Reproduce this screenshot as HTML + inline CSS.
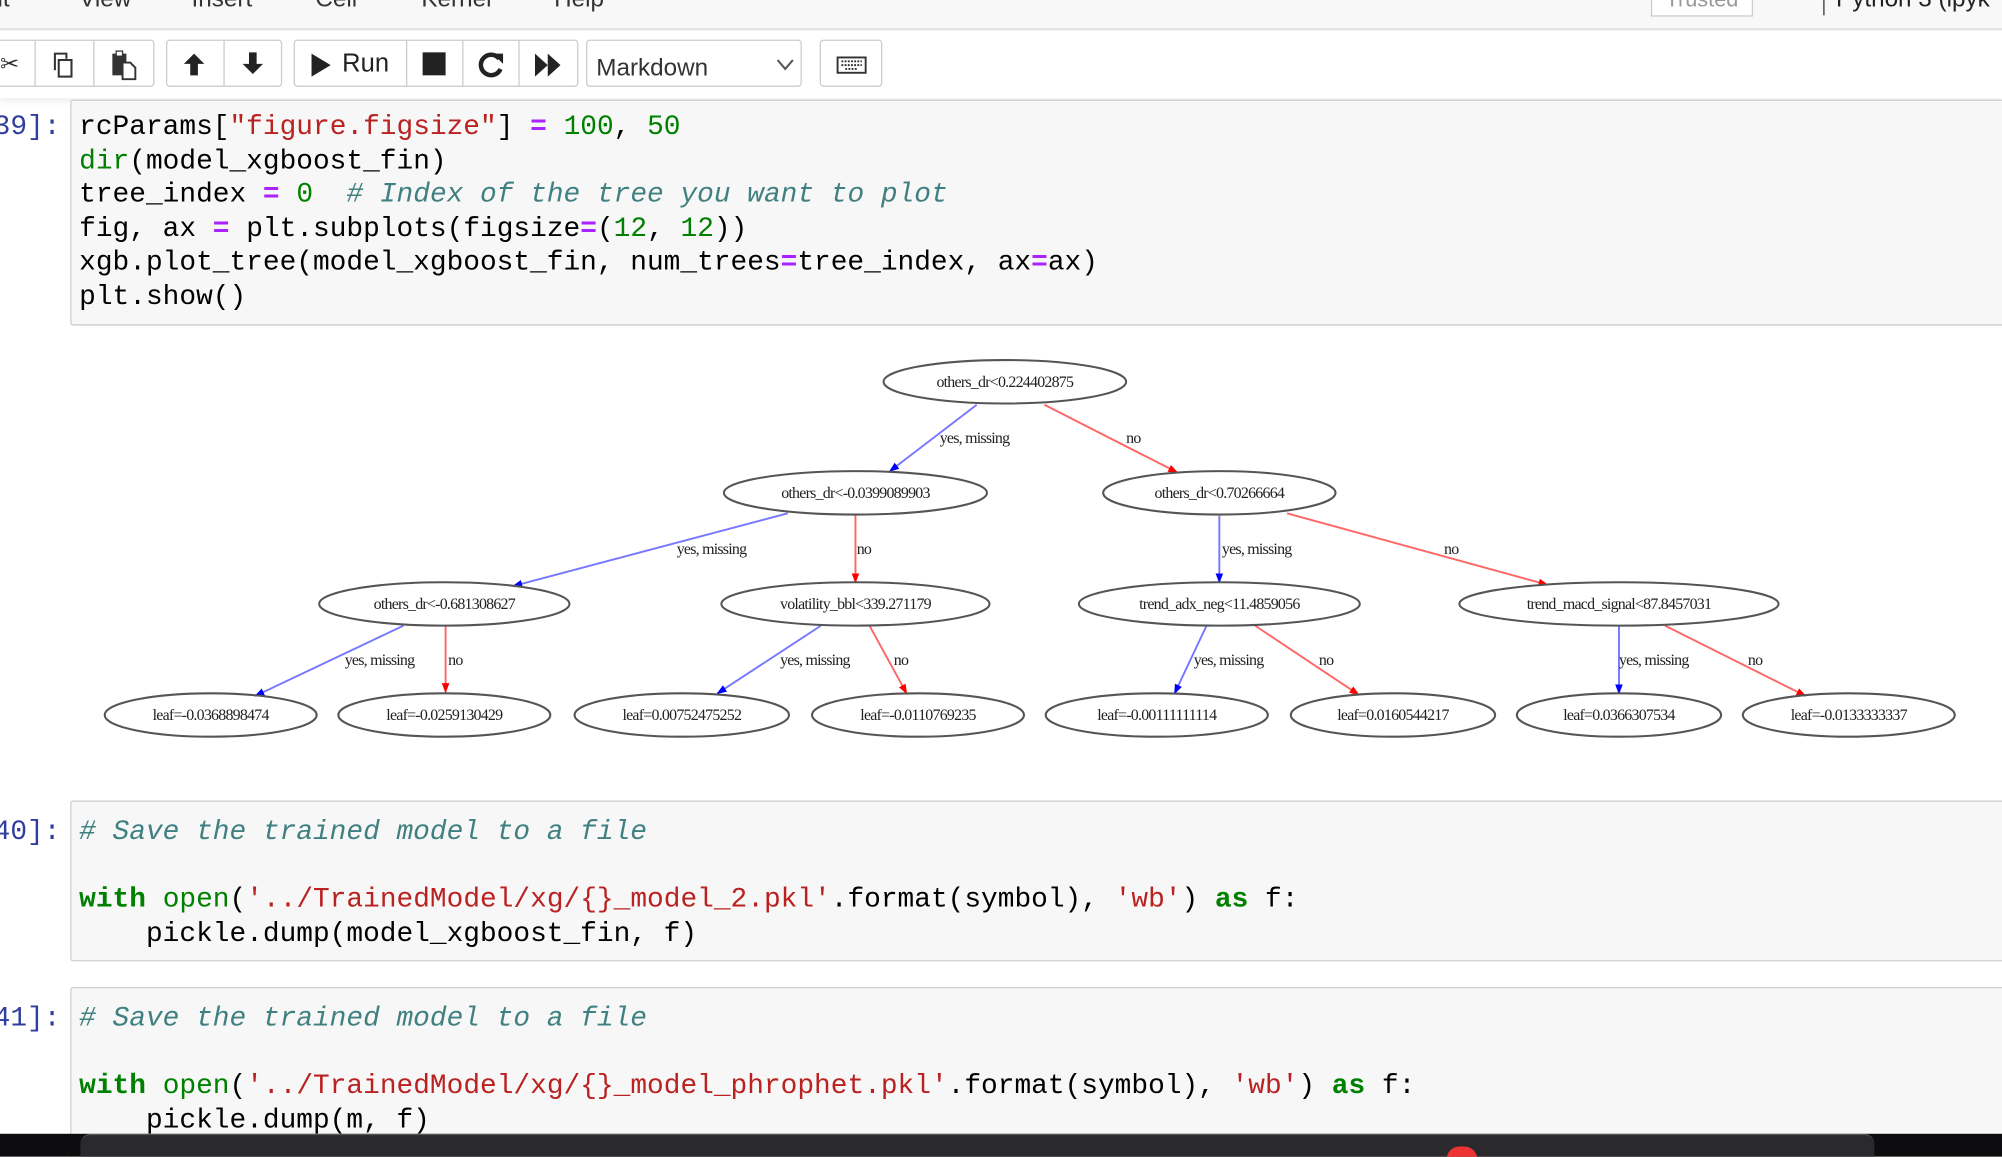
<!DOCTYPE html>
<html><head><meta charset="utf-8"><style>
html,body{margin:0;padding:0;width:2002px;height:1156px;overflow:hidden;background:#fff}
#w{position:absolute;left:0;top:0;width:1568px;height:906px;transform:scale(1.27679);transform-origin:0 0;background:#fff;font-family:"Liberation Sans",sans-serif;overflow:hidden}
.abs{position:absolute}
.menu{top:0;left:0;width:1568px;height:22px;background:#f8f8f8;border-bottom:2px solid #e5e5e5}
.menu span{position:absolute;top:-11px;font-size:19px;color:#333}
.tb{top:24px;left:0;width:1568px;height:53px;background:#fff;box-shadow:0 3px 5px rgba(0,0,0,.08)}
.btn{position:absolute;top:31px;height:37px;border:1px solid #ccc;background:#fff;border-radius:3px;box-sizing:border-box}
.sep{position:absolute;top:31px;height:37px;border-left:1px solid #ccc}
.cell{position:absolute;left:55px;width:1520px;background:#f7f7f7;border:1px solid #cfcfcf;border-radius:2px;box-sizing:border-box}
.code{position:absolute;left:62px;font-family:"Liberation Mono",monospace;font-size:21.8px;line-height:26.6px;white-space:pre;color:#000}
.pr{position:absolute;left:-5px;font-family:"Liberation Mono",monospace;font-size:21.8px;color:#303f9f;white-space:pre}
.k{color:#008000;font-weight:bold}.b{color:#008000}.s{color:#ba2121}.o{color:#aa22ff;font-weight:bold}.c{color:#408080;font-style:italic}.n{color:#008000}
</style></head><body><div id="w">
<div class="abs menu">
<span style="left:-2px">it</span><span style="left:62px">View</span><span style="left:150px">Insert</span><span style="left:247px">Cell</span><span style="left:330px">Kernel</span><span style="left:434px">Help</span>
<div class="abs" style="left:1293px;top:-4px;width:78px;height:15px;border:1px solid #ccc;background:#fff;font-size:17px;color:#999;text-align:center;line-height:6px;overflow:hidden">Trusted</div>
<div class="abs" style="left:1428px;top:-2px;height:14px;border-left:1.5px solid #333"></div>
<span style="left:1438px;color:#222">Python 3 (ipyk</span>
</div>
<div class="abs tb"></div>
<div class="btn" style="left:-5px;width:126px"></div><div class="sep" style="left:27px"></div><div class="sep" style="left:73px"></div>
<div class="abs" style="left:0;top:40px;font-size:18px;color:#333">&#x2702;</div>
<svg class="abs" style="left:38px;top:39px" width="24" height="24" viewBox="0 0 24 24" fill="none" stroke="#333" stroke-width="1.6"><rect x="8" y="8" width="10" height="13"/><path d="M5 16V3h9v4"/></svg>
<svg class="abs" style="left:85px;top:39px" width="24" height="24" viewBox="0 0 24 24" fill="#333"><rect x="3" y="3" width="11" height="17"/><rect x="6" y="1" width="5" height="4" fill="#fff" stroke="#333"/><path d="M11 10h6l4 4v9H11z" fill="#fff" stroke="#333" stroke-width="1.5"/></svg>
<div class="btn" style="left:130px;width:91px"></div><div class="sep" style="left:175px"></div>
<svg class="abs" style="left:141px;top:39px" width="22" height="22" viewBox="0 0 22 22"><path d="M11 3L3 11h5v9h6v-9h5z" fill="#222"/></svg>
<svg class="abs" style="left:187px;top:39px" width="22" height="22" viewBox="0 0 22 22"><path d="M11 19L3 11h5V2h6v9h5z" fill="#222"/></svg>
<div class="btn" style="left:230px;width:223px"></div><div class="sep" style="left:318px"></div><div class="sep" style="left:362px"></div><div class="sep" style="left:406px"></div>
<svg class="abs" style="left:242px;top:41px" width="18" height="20"><path d="M2 1L17 10L2 19z" fill="#222"/></svg>
<div class="abs" style="left:268px;top:39px;font-size:20px;color:#222">Run</div>
<div class="abs" style="left:331px;top:41px;width:18px;height:18px;background:#222"></div>
<svg class="abs" style="left:374px;top:39px" width="22" height="22" viewBox="0 0 22 22"><path d="M17 7A8 8 0 1 0 18 15" fill="none" stroke="#222" stroke-width="3.5"/><path d="M12 3l8 0 0 8z" fill="#222"/></svg>
<svg class="abs" style="left:418px;top:41px" width="22" height="20"><path d="M1 1l10 9-10 9zM11 1l10 9-10 9z" fill="#222"/></svg>
<div class="btn" style="left:459px;width:169px"></div>
<div class="abs" style="left:467px;top:43px;font-size:19px;color:#333">Markdown</div>
<svg class="abs" style="left:607px;top:45px" width="16" height="12"><path d="M2 2l6 7 6-7" fill="none" stroke="#555" stroke-width="1.6"/></svg>
<div class="btn" style="left:642px;width:49px"></div>
<svg class="abs" style="left:655px;top:44px" width="24" height="14" viewBox="0 0 24 14"><rect x="1" y="1" width="22" height="12" fill="none" stroke="#333" stroke-width="1.5"/><path d="M4 4h16M4 7h16M7 10h10" stroke="#333" stroke-width="1.5" stroke-dasharray="1.5 1"/></svg>

<div class="pr" style="top:87px">39]:</div>
<div class="cell" style="top:78px;height:177px"></div>
<div class="code" style="top:87px">rcParams[<span class="s">"figure.figsize"</span>] <span class="o">=</span> <span class="n">100</span>, <span class="n">50</span>
<span class="b">dir</span>(model_xgboost_fin)
tree_index <span class="o">=</span> <span class="n">0</span>  <span class="c"># Index of the tree you want to plot</span>
fig, ax <span class="o">=</span> plt.subplots(figsize<span class="o">=</span>(<span class="n">12</span>, <span class="n">12</span>))
xgb.plot_tree(model_xgboost_fin, num_trees<span class="o">=</span>tree_index, ax<span class="o">=</span>ax)
plt.show()</div>

<svg class="abs" style="left:0;top:0" width="1568" height="620" font-family="Liberation Serif,serif" font-size="12.5" text-anchor="middle">
<defs><marker id="mb" markerWidth="8" markerHeight="8" refX="7" refY="4" orient="auto" markerUnits="userSpaceOnUse"><path d="M0 1L8 4L0 7z" fill="#00f"/></marker><marker id="mr" markerWidth="8" markerHeight="8" refX="7" refY="4" orient="auto" markerUnits="userSpaceOnUse"><path d="M0 1L8 4L0 7z" fill="#f00"/></marker></defs>
<g stroke-width="1.5">
<path d="M765 317L697 369" stroke="#77f" marker-end="url(#mb)"/>
<path d="M818 317L922 370" stroke="#f66" marker-end="url(#mr)"/>
<path d="M617 402L402 459" stroke="#77f" marker-end="url(#mb)"/>
<path d="M670 403L670 456" stroke="#f66" marker-end="url(#mr)"/>
<path d="M955 404L955 456" stroke="#77f" marker-end="url(#mb)"/>
<path d="M1008 402L1212 458" stroke="#f66" marker-end="url(#mr)"/>
<path d="M316 490L200 545" stroke="#77f" marker-end="url(#mb)"/>
<path d="M349 490L349 542" stroke="#f66" marker-end="url(#mr)"/>
<path d="M643 490L562 543" stroke="#77f" marker-end="url(#mb)"/>
<path d="M681 490L710 543" stroke="#f66" marker-end="url(#mr)"/>
<path d="M945 490L920 543" stroke="#77f" marker-end="url(#mb)"/>
<path d="M983 490L1064 544" stroke="#f66" marker-end="url(#mr)"/>
<path d="M1268 490L1268 543" stroke="#77f" marker-end="url(#mb)"/>
<path d="M1304 490L1414 545" stroke="#f66" marker-end="url(#mr)"/>
</g>
<g fill="none" stroke="#555" stroke-width="1.6">
<ellipse cx="787" cy="299" rx="95" ry="17"/>
<ellipse cx="670" cy="386" rx="103" ry="17"/><ellipse cx="955" cy="386" rx="91" ry="17"/>
<ellipse cx="348" cy="473" rx="98" ry="17"/><ellipse cx="670" cy="473" rx="105" ry="17"/><ellipse cx="955" cy="473" rx="110" ry="17"/><ellipse cx="1268" cy="473" rx="125" ry="17"/>
<ellipse cx="165" cy="560" rx="83" ry="17"/><ellipse cx="348" cy="560" rx="83" ry="17"/><ellipse cx="534" cy="560" rx="84" ry="17"/><ellipse cx="719" cy="560" rx="83" ry="17"/><ellipse cx="906" cy="560" rx="87" ry="17"/><ellipse cx="1091" cy="560" rx="80" ry="17"/><ellipse cx="1268" cy="560" rx="80" ry="17"/><ellipse cx="1448" cy="560" rx="83" ry="17"/>
</g>
<g fill="#222" letter-spacing="-0.6">
<text x="787" y="303">others_dr&lt;0.224402875</text>
<text x="670" y="390">others_dr&lt;-0.0399089903</text><text x="955" y="390">others_dr&lt;0.70266664</text>
<text x="348" y="477">others_dr&lt;-0.681308627</text><text x="670" y="477">volatility_bbl&lt;339.271179</text><text x="955" y="477">trend_adx_neg&lt;11.4859056</text><text x="1268" y="477">trend_macd_signal&lt;87.8457031</text>
<text x="165" y="564">leaf=-0.0368898474</text><text x="348" y="564">leaf=-0.0259130429</text><text x="534" y="564">leaf=0.00752475252</text><text x="719" y="564">leaf=-0.0110769235</text><text x="906" y="564">leaf=-0.00111111114</text><text x="1091" y="564">leaf=0.0160544217</text><text x="1268" y="564">leaf=0.0366307534</text><text x="1448" y="564">leaf=-0.0133333337</text>
<g text-anchor="start">
<text x="736" y="347">yes, missing</text><text x="882" y="347">no</text>
<text x="530" y="434">yes, missing</text><text x="671" y="434">no</text>
<text x="957" y="434">yes, missing</text><text x="1131" y="434">no</text>
<text x="270" y="521">yes, missing</text><text x="351" y="521">no</text>
<text x="611" y="521">yes, missing</text><text x="700" y="521">no</text>
<text x="935" y="521">yes, missing</text><text x="1033" y="521">no</text>
<text x="1268" y="521">yes, missing</text><text x="1369" y="521">no</text>
</g></g>
</svg>

<div class="pr" style="top:639px">40]:</div>
<div class="cell" style="top:627px;height:126px"></div>
<div class="code" style="top:639px"><span class="c"># Save the trained model to a file</span>

<span class="k">with</span> <span class="b">open</span>(<span class="s">'../TrainedModel/xg/{}_model_2.pkl'</span>.format(symbol), <span class="s">'wb'</span>) <span class="k">as</span> f:
    pickle.dump(model_xgboost_fin, f)</div>

<div class="pr" style="top:785px">41]:</div>
<div class="cell" style="top:773px;height:140px"></div>
<div class="code" style="top:785px"><span class="c"># Save the trained model to a file</span>

<span class="k">with</span> <span class="b">open</span>(<span class="s">'../TrainedModel/xg/{}_model_phrophet.pkl'</span>.format(symbol), <span class="s">'wb'</span>) <span class="k">as</span> f:
    pickle.dump(m, f)</div>

<div class="abs" style="left:0;top:888px;width:1568px;height:18px;background:#0d0d0f"></div>
<div class="abs" style="left:63px;top:888px;width:1405px;height:18px;background:#2a2a2d;border-radius:8px 8px 0 0;border-top:1px solid #555"></div>
<div class="abs" style="left:1133px;top:898px;width:24px;height:10px;background:#e33;border-radius:12px 12px 0 0"></div>
</div></body></html>
